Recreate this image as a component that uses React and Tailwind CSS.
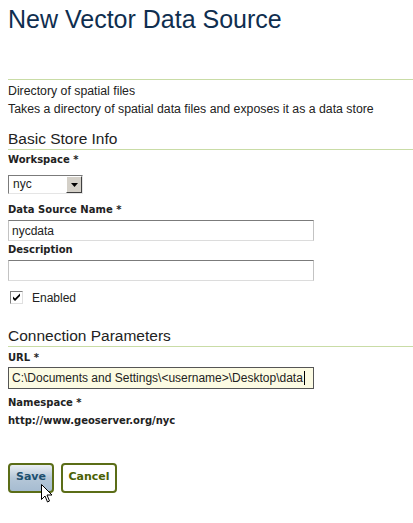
import { useState } from "react";

const body = { fontFamily: '"Liberation Sans", Arial, sans-serif' };
const bold = { fontFamily: '"DejaVu Sans", Verdana, sans-serif' };

function Label({ children }) {
  return (
    <div className="text-[10px] font-bold leading-[14px] text-[#222]" style={bold}>
      {children}
    </div>
  );
}

function Section({ children }) {
  return (
    <div className="border-b border-[#c9dca6] pb-[1px] text-[15.5px] leading-[18px] text-[#222]" style={body}>
      {children}
    </div>
  );
}

function TextInput({ value, tint }) {
  return (
    <div
      className={`flex w-[306px] items-center border px-[3px] text-[12px] text-[#222] ${
        tint
          ? "h-[22px] border-[#555] bg-[#fcfbe3]"
          : "h-[21px] border-t-[#7b7b7b] border-x-[#c3c3c3] border-b-[#dcdcdc] bg-white"
      }`}
      style={body}
    >
      {value}
      {tint ? <span className="ml-[1px] h-[14px] w-px bg-black" /> : null}
    </div>
  );
}

export default function App() {
  const [enabled, setEnabled] = useState(true);

  return (
    <div className="relative h-[523px] w-[413px] overflow-hidden bg-white pl-[8px]" style={body}>
      <h1 className="pt-[5px] text-[25px] leading-[28px] text-[#0f2e4f]">New Vector Data Source</h1>

      <div className="mt-[46px] border-t border-[#c9dca6] pt-[2px] text-[12.3px] leading-[18px] text-[#222]">
        <p>Directory of spatial files</p>
        <p>Takes a directory of spatial data files and exposes it as a data store</p>
      </div>

      <div className="mt-[12px]">
        <Section>Basic Store Info</Section>
      </div>

      <div className="mt-[3px]">
        <Label>Workspace *</Label>
      </div>
      <div className="mt-[8px] flex h-[19px] w-[75px] border border-t-[#7b7b7b] border-l-[#7b7b7b] border-r-[#e5e5e5] border-b-[#e5e5e5] bg-white">
        <span className="flex-1 pl-[4px] text-[12px] leading-[17px] text-[#222]">nyc</span>
        <span className="flex w-[16px] items-center justify-center border border-t-white border-l-white border-r-[#404040] border-b-[#404040] bg-[#d4d0c8]">
          <svg width="7" height="4" viewBox="0 0 7 4">
            <path d="M0 0h7L3.5 4z" fill="#000" />
          </svg>
        </span>
      </div>

      <div className="mt-[9px]">
        <Label>Data Source Name *</Label>
      </div>
      <div className="mt-[3px]">
        <TextInput value="nycdata" />
      </div>

      <div className="mt-[2px]">
        <Label>Description</Label>
      </div>
      <div className="mt-[3px]">
        <TextInput value="" />
      </div>

      <label className="mt-[10px] flex h-[13px] items-center gap-[9px] pl-[2px] text-[12px] text-[#222]">
        <span
          onClick={() => setEnabled((v) => !v)}
          className="flex h-[13px] w-[13px] items-center justify-center border border-t-[#808080] border-l-[#808080] border-r-[#e0e0e0] border-b-[#e0e0e0] bg-white"
        >
          {enabled ? (
            <svg width="9" height="9" viewBox="0 0 9 9">
              <path d="M1 3.5l2 2 5-5v2.5l-5 5-2-2z" fill="#000" />
            </svg>
          ) : null}
        </span>
        Enabled
      </label>

      <div className="mt-[23px]">
        <Section>Connection Parameters</Section>
      </div>

      <div className="mt-[4px]">
        <Label>URL *</Label>
      </div>
      <div className="mt-[2px]">
        <TextInput tint value={"C:\\Documents and Settings\\<username>\\Desktop\\data"} />
      </div>

      <div className="mt-[7px]">
        <Label>Namespace *</Label>
      </div>
      <div className="mt-[4px] text-[10px] font-bold leading-[14px] text-[#222]" style={bold}>
        http://www.geoserver.org/nyc
      </div>

      <div className="mt-[35px] flex gap-[7px]">
        <button
          className="h-[30px] w-[46px] rounded-[4px] border-2 border-[#5b6d17] bg-gradient-to-b from-[#e9eef3] via-[#b5c7d8] to-[#a6bcd1] pb-[1px] text-[11px] font-bold text-[#1d4f6e]"
          style={bold}
        >
          Save
        </button>
        <button
          className="h-[30px] w-[56px] rounded-[4px] border-2 border-[#5b6d17] bg-white pb-[1px] text-[11px] font-bold text-[#4b6104]"
          style={bold}
        >
          Cancel
        </button>
      </div>

      <svg className="absolute left-[41px] top-[484px]" width="13" height="20" viewBox="0 0 13 20">
        <path d="M0.5 0.5v15l3.5-3.5 2.5 6 2-1-2.5-6h5z" fill="#fff" stroke="#000" strokeWidth="1" />
      </svg>
    </div>
  );
}
